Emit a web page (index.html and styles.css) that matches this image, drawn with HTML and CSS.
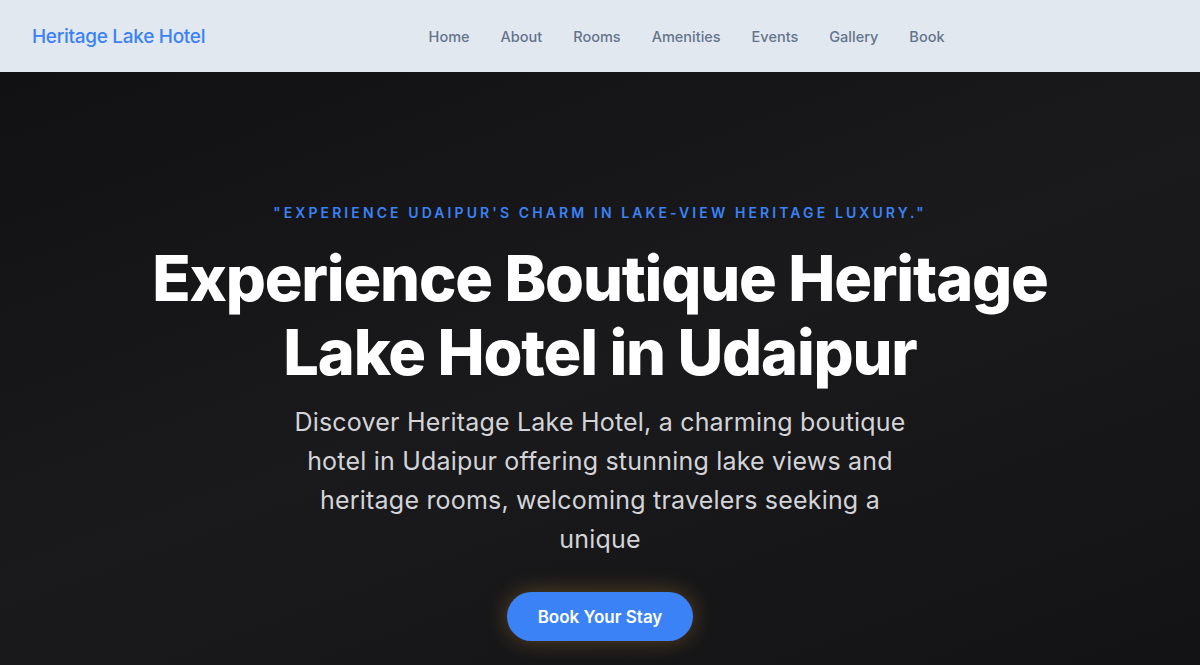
FILE: index.html
```html
<!DOCTYPE html>
<html lang="en">
<head>
    <meta charset="UTF-8">
    <meta name="viewport" content="width=device-width, initial-scale=1.0">
    <title>Heritage Lake Hotel</title>
    <link rel="stylesheet" href="styles.css">
</head>
<body>
    <header class="site-header">
        <a href="#" class="logo">Heritage Lake Hotel</a>
        <nav class="main-nav">
            <a href="#">Home</a>
            <a href="#">About</a>
            <a href="#">Rooms</a>
            <a href="#">Amenities</a>
            <a href="#">Events</a>
            <a href="#">Gallery</a>
            <a href="#">Book</a>
        </nav>
        <div class="header-spacer"></div>
    </header>

    <section class="hero">
        <p class="tagline">"Experience Udaipur's charm in lake-view heritage luxury."</p>
        <h1>Experience Boutique Heritage Lake Hotel in Udaipur</h1>
        <p class="intro">Discover Heritage Lake Hotel, a charming boutique hotel in Udaipur offering stunning lake views and heritage rooms, welcoming travelers seeking a unique</p>
        <a href="#" class="btn-book">Book Your Stay</a>
    </section>
</body>
</html>
```

FILE: styles.css
```css
* {
    box-sizing: border-box;
}

body {
    margin: 0;
    font-family: Inter, "Noto Sans", sans-serif;
    background: #141416;
}

a {
    text-decoration: none;
}

/* Horní lišta */
.site-header {
    height: 72px;
    padding: 0 32px;
    display: flex;
    align-items: center;
    justify-content: space-between;
    background: #e2e8f0;
}

.logo {
    color: #3b82f6;
    font-size: 19px;
    font-weight: 500;
    letter-spacing: -0.3px;
}

.main-nav {
    display: flex;
    gap: 31px;
}

.main-nav a {
    color: #64748b;
    font-size: 14.5px;
    font-weight: 500;
}

.header-spacer {
    width: 0;
}

/* Hero sekce */
.hero {
    height: 593px;
    padding-top: 132px;
    display: flex;
    flex-direction: column;
    align-items: center;
    text-align: center;
    background: linear-gradient(160deg, #111113 0%, #1a1a1c 50%, #131315 100%);
}

.tagline {
    margin: 0 0 20px;
    color: #3b82f6;
    font-size: 14px;
    font-weight: 600;
    letter-spacing: 3.1px;
    text-transform: uppercase;
}

.hero h1 {
    margin: 0;
    max-width: 940px;
    color: #fff;
    font-size: 63px;
    font-weight: 800;
    line-height: 74px;
    letter-spacing: -1.2px;
}

.intro {
    margin: 14px 0 0;
    max-width: 620px;
    color: #d4d4d8;
    font-size: 25px;
    line-height: 39px;
    letter-spacing: 0.2px;
}

.btn-book {
    margin-top: 33px;
    padding: 0 31px;
    height: 49px;
    display: flex;
    align-items: center;
    border-radius: 999px;
    background: #3b82f6;
    color: #fff;
    font-size: 17px;
    font-weight: 600;
    box-shadow: 0 0 22px rgba(217, 150, 60, 0.35);
}
```
